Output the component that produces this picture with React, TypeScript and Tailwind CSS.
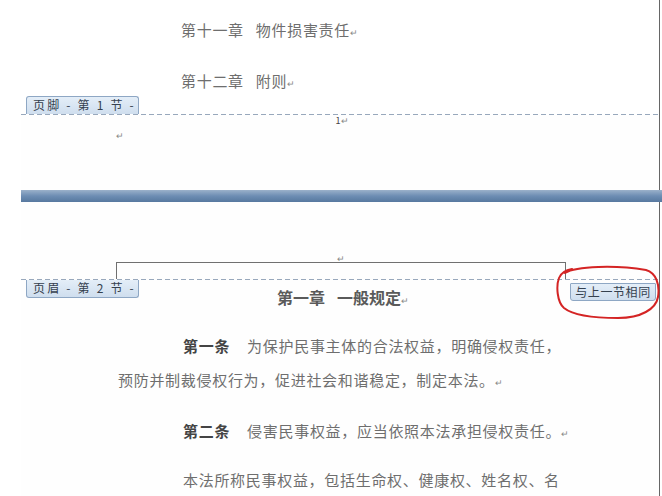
const dash =
  'h-px shrink-0 bg-[repeating-linear-gradient(90deg,#98a8bc_0_5px,transparent_5px_8px)]';
const tab =
  'h-[18px] border border-[#8ea7c4] bg-gradient-to-b from-[#e4eef8] to-[#cfdeee] text-[12px] leading-[16px] text-[#34404e] whitespace-nowrap';

function Ret({ className = '' }: { className?: string }) {
  return <span className={`text-[9px] font-normal text-[#888] ${className}`}>↵</span>;
}

export default function App() {
  return (
    <div className="relative w-[662px] h-[496px] overflow-hidden bg-white pl-[21px] flex flex-col font-['Noto_Sans_CJK_SC',sans-serif]">
      {/* page 1 bottom */}
      <div className="h-[190px] shrink-0 mr-[2px] border-r-[1.5px] border-[#666] flex flex-col">
        <div className="h-[96px] shrink-0 pl-[160px] text-[15px] leading-[16px] tracking-[0.7px] text-[#6e6e6e] whitespace-nowrap">
          <div className="mt-[22px]">
            第十一章<span className="ml-[12px]">物件损害责任</span>
            <Ret />
          </div>
          <div className="mt-[32px]">
            第十二章<span className="ml-[12px]">附则</span>
            <Ret />
          </div>
        </div>
        <div className="pl-[5px]">
          <div className={`${tab} tracking-[2.2px] w-[113px] border-b-0 rounded-t-[3px] pl-[6px] h-[17px]`}>页脚 - 第 1 节 -</div>
        </div>
        <div className={dash} />
        <div className="flex-1 bg-[#fefefe] text-[9px] leading-[10px] text-[#444]">
          <div className="mt-[1px] text-center pl-[4px]">1<Ret /></div>
          <div className="mt-[5px] pl-[95px]"><Ret /></div>
        </div>
      </div>

      {/* page separator */}
      <div className="h-[12px] shrink-0 bg-gradient-to-b from-[#9bb1ca] via-[#6d8db3] to-[#57789f]" />

      {/* page 2 top */}
      <div className="flex-1 mr-[2px] border-r-[1.5px] border-[#666] flex flex-col bg-[#fefefe]">
        <div className="mt-[48px] h-[10px] leading-[10px] text-center pl-[2px]"><Ret /></div>
        <div className="mt-[2px] shrink-0 ml-[95px] w-[450px] h-[17px] border-t-[1.5px] border-x border-[#707070]" />
        <div className={dash} />
        <div className="grid grid-cols-[1fr_auto_1fr]">
          <div className="pl-[5px]">
            <div className={`${tab} tracking-[2.2px] w-[113px] border-t-0 rounded-b-[3px] pl-[6px]`}>页眉 - 第 2 节 -</div>
          </div>
          <div className="mt-[9px] text-[16px] leading-[16px] font-bold text-[#5a5a5a] whitespace-nowrap pl-[6px]">
            第一章<span className="ml-[12px]">一般规定</span>
            <Ret />
          </div>
          <div className="flex justify-end pr-[3px]">
            <div className={`${tab} mt-[3px] w-[86px] rounded-b-[3px] rounded-t-[1px] text-center tracking-[0.6px]`}>与上一节相同</div>
          </div>
        </div>

        <div className="pl-[97px] text-[15px] leading-[34px] tracking-[0.7px] text-[#6e6e6e] whitespace-nowrap">
          <p className="mt-[20px] indent-[65px]">
            <b className="text-[#444]">第一条</b>
            <span className="ml-[17px]">为保护民事主体的合法权益，明确侵权责任，</span>
            <br />
            预防并制裁侵权行为，促进社会和谐稳定，制定本法。<Ret />
          </p>
          <p className="mt-[14px] indent-[65px]">
            <b className="text-[#444]">第二条</b>
            <span className="ml-[17px]">侵害民事权益，应当依照本法承担侵权责任。</span>
            <Ret />
          </p>
          <p className="mt-[12px] indent-[65px]">本法所称民事权益，包括生命权、健康权、姓名权、名</p>
        </div>
      </div>

      {/* hand-drawn red circle */}
      <svg
        className="absolute left-[556px] top-[264px]"
        width="106"
        height="58"
        viewBox="0 0 106 58"
        fill="none"
        stroke="#d42424"
        strokeWidth="2"
        strokeLinecap="round"
      >
        <path d="M9 9 C20 2, 60 1, 90 6 C100 9, 104 20, 102 33 C100 45, 85 54, 62 54 C40 54, 18 52, 8 44 C1 38, 0 22, 3 14 C5 9, 10 6, 16 5" />
      </svg>
    </div>
  );
}
